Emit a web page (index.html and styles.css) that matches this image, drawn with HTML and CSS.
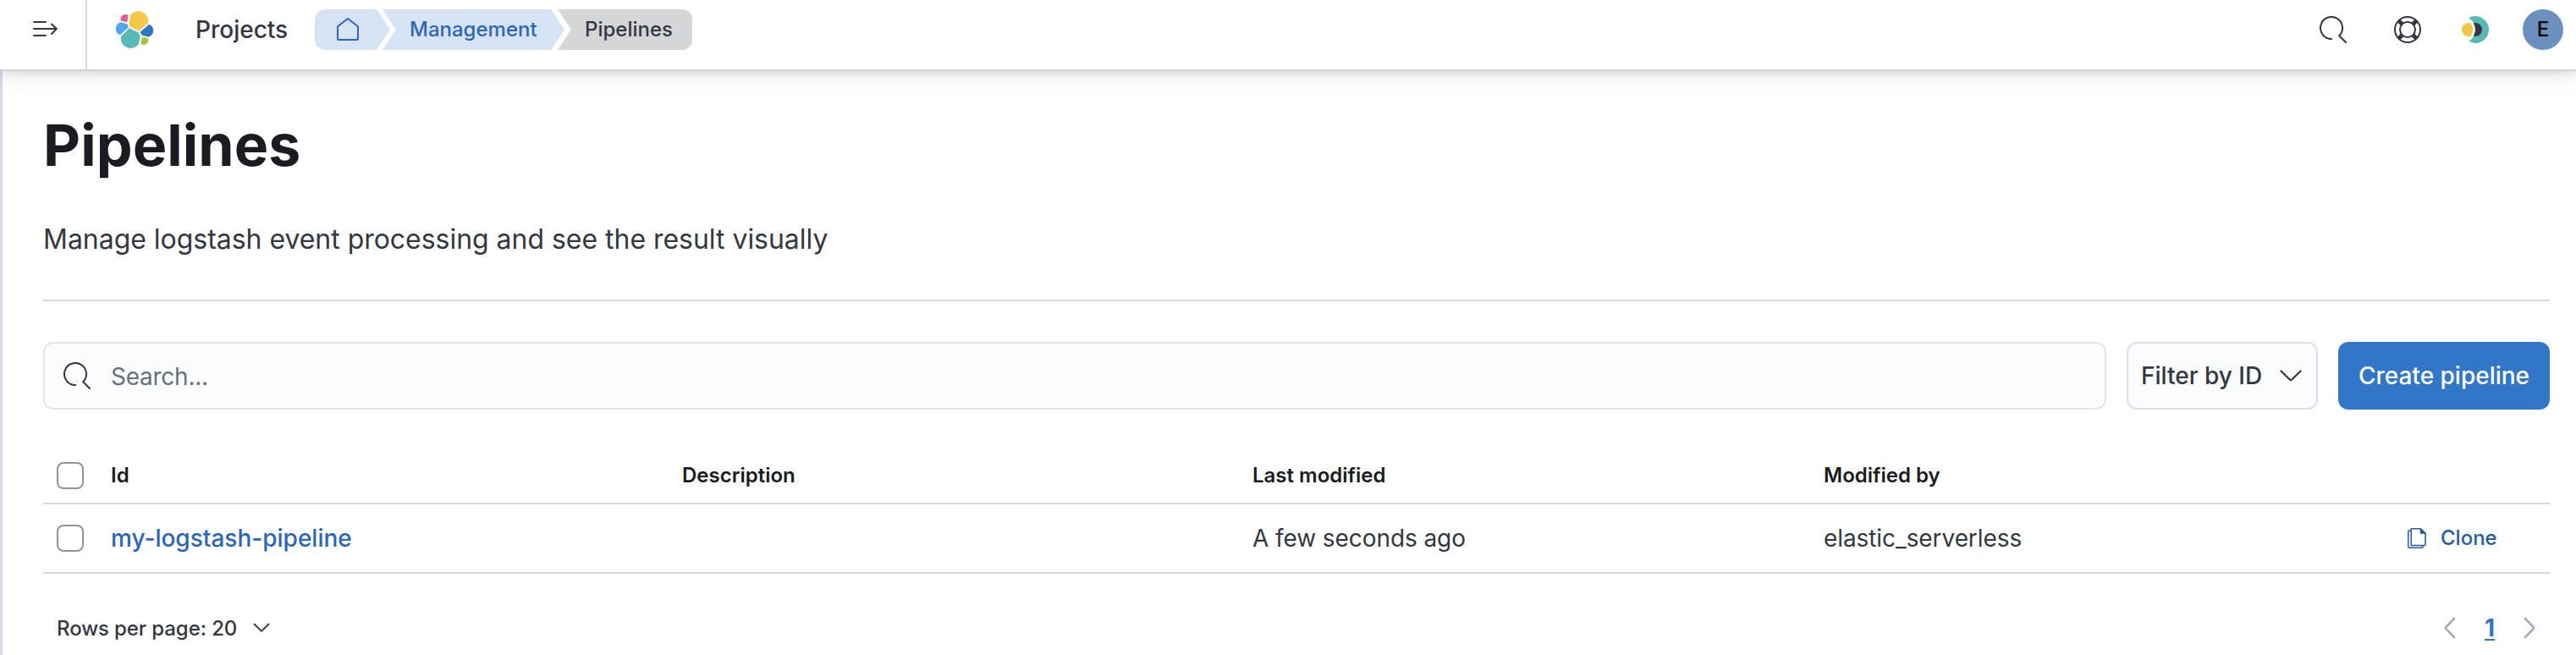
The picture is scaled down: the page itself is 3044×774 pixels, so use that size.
FILE: index.html
```html
<!DOCTYPE html>
<html lang="en">
<head>
<meta charset="utf-8">
<title>Pipelines</title>
<link rel="stylesheet" href="styles.css">
</head>
<body>
<div class="page">
  <header class="header">
    <button class="nav-toggle" aria-label="Toggle navigation">
      <svg width="32" height="32" viewBox="0 0 32 32" fill="none" stroke="#343741" stroke-width="2" stroke-linecap="round" stroke-linejoin="round"><path d="M3 7h14M3 15h27M3 23h14M24 9.5l5.8 5.5-5.8 6"/></svg>
    </button>
    <svg class="logo" width="48" height="48" viewBox="0 0 32 32">
      <path fill="#f5c747" d="M12.58 13.787l7.002 3.211 7.066-6.213a7.849 7.849 0 00.152-1.557c0-4.287-3.464-7.775-7.722-7.775a7.697 7.697 0 00-6.368 3.384l-1.176 6.125 1.046 2.825z"/>
      <path fill="#57bab4" d="M5.333 21.215A7.967 7.967 0 005.18 22.8c0 4.302 3.479 7.802 7.755 7.802a7.725 7.725 0 006.391-3.406l1.166-6.1-1.556-2.994-7.03-3.219-6.573 6.331z"/>
      <path fill="#df5b9b" d="M5.288 9.067l4.8 1.137L11.14 4.73a3.785 3.785 0 00-2.3-.777 3.82 3.82 0 00-3.807 3.835c0 .44.09.87.255 1.28z"/>
      <path fill="#51a6ef" d="M4.872 10.214C2.728 10.924 1.24 12.99 1.24 15.28a5.311 5.311 0 003.372 4.966l6.736-6.12-1.237-2.658-5.239-1.254z"/>
      <path fill="#9dc83d" d="M20.873 27.186a3.78 3.78 0 002.287.78 3.82 3.82 0 003.807-3.834 3.8 3.8 0 00-.254-1.28l-4.797-1.128-1.043 5.462z"/>
      <path fill="#3274c6" d="M21.848 20.563l5.28 1.241c2.146-.71 3.634-2.776 3.634-5.067a5.3 5.3 0 00-3.4-4.942l-6.906 6.06 1.392 2.708z"/>
    </svg>
    <span class="projects">Projects</span>
    <nav class="crumbs">
      <a class="crumb crumb-home" aria-label="Home">
        <svg width="32" height="32" viewBox="0 0 32 32" fill="none" stroke="#2c66b4" stroke-width="2" stroke-linejoin="round"><path d="M4 12.2L16 3l12 9.2V27a1 1 0 01-1 1H5a1 1 0 01-1-1z"/></svg>
      </a>
      <a class="crumb crumb-mid">Management</a>
      <span class="crumb crumb-last">Pipelines</span>
    </nav>
    <div class="header-right">
      <svg class="icon-search" width="32" height="32" viewBox="0 0 32 32" fill="none" stroke="#343741" stroke-width="2" stroke-linecap="round" stroke-linejoin="round"><path d="M14.2 27A13 13 0 1 1 23.2 23.2L31 31"/></svg>
      <svg class="icon-help" width="32" height="32" viewBox="0 0 32 32" fill="none" stroke="#343741" stroke-width="2"><circle cx="16" cy="16" r="15"/><circle cx="16" cy="16" r="9"/><path stroke-width="5" d="M5.6 5.6l4 4M26.4 5.6l-4 4M5.6 26.4l4-4M26.4 26.4l-4-4"/></svg>
      <svg class="icon-news" width="32" height="32" viewBox="0 0 32 32"><path fill="#57bab4" d="M16 0a16 16 0 110 32 16 16 0 01-7.700-2.200A16 16 0 008.300 2.200 16 16 0 0116 0z"/><path fill="#343741" d="M13.700 8H16a8 8 0 010 16h-2.300a16 16 0 000-16z"/><path fill="#f5c747" d="M8 8c1.100 0 2.100.2 3 .6a15 15 0 010 14.800c-.9.400-1.900.6-3 .6A8 8 0 018 8z"/></svg>
      <span class="avatar">E</span>
    </div>
  </header>

  <main class="content">
    <h1 class="title">Pipelines</h1>
    <p class="lead">Manage logstash event processing and see the result visually</p>
    <div class="toolbar">
      <div class="search">
        <svg width="32" height="32" viewBox="0 0 32 32" fill="none" stroke="#343741" stroke-width="2" stroke-linecap="round" stroke-linejoin="round"><path d="M14.2 27A13 13 0 1 1 23.2 23.2L31 31"/></svg>
        <span>Search...</span>
      </div>
      <button class="filter">Filter by ID
        <svg width="26" height="14" viewBox="0 0 26 14" fill="none" stroke="#343741" stroke-width="2.2" stroke-linecap="round" stroke-linejoin="round"><path d="M1.500 1.500l10.500 10.200q1 .9 2 0L24.500 1.500"/></svg>
      </button>
      <button class="create">Create pipeline</button>
    </div>

    <div class="table">
      <div class="row row-head">
        <span class="check"></span><span>Id</span><span>Description</span><span>Last modified</span><span>Modified by</span><span></span>
      </div>
      <div class="row row-body">
        <span class="check"></span><a class="link">my-logstash-pipeline</a><span></span><span class="cell">A few seconds ago</span><span class="cell">elastic_serverless</span>
        <a class="clone">
          <svg width="22" height="24" viewBox="0 0 22 24" fill="none" stroke="#265b9f" stroke-width="1.500" stroke-linejoin="round"><path d="M4.200.8h11L21 6.500v13.300a.8.800 0 01-.8.800H5a.8.800 0 01-.8-.8z"/><path fill="#265b9f" d="M15.500.8V6H21z"/><path d="M4 2.900H1.800a1 1 0 00-1 1v18.300a1 1 0 001 1H17a1 1 0 001-1v-1.500"/></svg>
          Clone
        </a>
      </div>
    </div>

    <footer class="pager">
      <div class="rows">Rows per page: 20
        <svg width="20" height="12" viewBox="0 0 20 12" fill="none" stroke="#343741" stroke-width="1.900" stroke-linecap="round" stroke-linejoin="round"><path d="M1.500 1.500l7.700 7.700q.8.700 1.600 0l7.700-7.700"/></svg>
      </div>
      <div class="pages">
        <svg width="14" height="26" viewBox="0 0 14 26" fill="none" stroke="#a2abba" stroke-width="2.600" stroke-linecap="round" stroke-linejoin="round"><path d="M12 2L2.300 12q-.8 1 0 2L12 24"/></svg>
        <span class="current">1</span>
        <svg width="14" height="26" viewBox="0 0 14 26" fill="none" stroke="#a2abba" stroke-width="2.600" stroke-linecap="round" stroke-linejoin="round"><path d="M2 2l9.700 10q.8 1 0 2L2 24"/></svg>
      </div>
    </footer>
  </main>
</div>
</body>
</html>
```

FILE: styles.css
```css
* { box-sizing: border-box; }
body {
  margin: 0;
  background: #fff;
  color: #343741;
  font-family: Inter, "Liberation Sans", sans-serif;
  font-size: 28px;
}
button { font: inherit; color: inherit; margin: 0; padding: 0; border: 0; background: none; }
svg { display: block; flex: none; }
.page { height: 774px; overflow: hidden; }

.header {
  height: 84px;
  padding-bottom: 12px;
  display: flex;
  align-items: center;
  border-bottom: 2px solid #cbd1de;
  background: #fff;
  line-height: 48px;
  position: relative;
  box-shadow: 0 1.400px 8px rgba(0,0,0,.08), 0 5.200px 14px rgba(0,0,0,.05), 0 12px 24px rgba(0,0,0,.05);
}
.nav-toggle {
  display: flex;
  align-items: flex-start;
  width: 103px;
  height: 82px;
  align-self: flex-start;
  border-right: 2px solid #d3dae6;
  padding: 19px 0 0 37px;
  flex: none;
}
.logo { margin-left: 32px; }
.projects { margin-left: 48px; width: 141px; font-weight: 500; white-space: nowrap; }

.crumbs { display: flex; font-size: 24px; font-weight: 500; line-height: 48px; }
.crumb { height: 48px; display: block; }
.crumb-home {
  width: 89px;
  padding: 8px 0 0 23px;
  background: #d6e3f4;
  border-radius: 12px 0 0 12px;
  clip-path: polygon(0 0, 73px 0, 100% 50%, 73px 100%, 0 100%);
}
.crumb-mid {
  width: 215px;
  margin-left: -9px;
  padding-left: 32px;
  background: #d6e3f4;
  color: #2c66b4;
  clip-path: polygon(0 0, 199px 0, 100% 50%, 199px 100%, 0 100%, 16px 50%);
}
.crumb-last {
  width: 159px;
  margin-left: -8px;
  padding-left: 32px;
  background: #d5d6d8;
  border-radius: 0 12px 12px 0;
  clip-path: polygon(0 0, 100% 0, 100% 100%, 0 100%, 16px 50%);
}
.header-right { margin-left: auto; margin-right: 15px; display: flex; align-items: center; }
.icon-help { margin-left: 56px; }
.icon-news { margin-left: 48px; }
.avatar {
  margin-left: 40px;
  width: 48px;
  height: 48px;
  border-radius: 50%;
  background: #6b90be;
  color: #000;
  font-size: 24px;
  font-weight: 500;
  line-height: 47px;
  text-align: center;
}

.content { height: 690px; border-left: 3px solid #d3dae6; padding: 47px 31px 0 48px; }
.title { margin: 0; font-size: 68px; line-height: 80px; font-weight: 700; letter-spacing: .1px; color: #1a1c21; }
.lead { margin: 0; padding: 48px 0 0; height: 145px; font-size: 32px; line-height: 48px; letter-spacing: -.03px; border-bottom: 2px solid #d3dae6; }

.toolbar { display: flex; gap: 24px; margin-top: 48px; height: 80px; font-weight: 500; }
.search {
  flex: 1;
  display: flex;
  align-items: center;
  gap: 24px;
  padding-left: 22px;
  border: 2px solid #e2e5ef;
  border-radius: 12px;
  background: #fbfcfd;
  color: #69707d;
  font-weight: 400;
  letter-spacing: -.25px;
}
.search svg { margin-top: -1px; }
.search span { padding-top: 1px; }
.filter {
  width: 226px;
  border: 2px solid #dadeea;
  border-radius: 12px;
  background: #fbfcfd;
  display: flex;
  align-items: center;
  justify-content: space-between;
  padding: 0 17px 0 15px;
  white-space: nowrap;
}
.create { width: 250px; border-radius: 12px; background: #3276c8; color: #fff; white-space: nowrap; }

.table { margin-top: 46px; }
.row {
  display: grid;
  grid-template-columns: 80px 675px 674px 675px 675px 1fr;
  align-items: center;
  border-bottom: 2px solid #d3dae6;
  white-space: nowrap;
}
.row-head { height: 66px; font-size: 24px; line-height: 28px; font-weight: 600; color: #1a1c21; }
.row-head span:not(.check) { padding-bottom: 1px; }
.row-body { height: 82px; }
.cell { letter-spacing: -.08px; }
.check { width: 32px; height: 32px; margin-left: 16px; border: 2px solid #949494; border-radius: 8px; background: #fff; }
.link { color: #2c66b4; font-weight: 500; }
.clone { display: flex; align-items: center; gap: 17px; padding-bottom: 1px; font-size: 24px; font-weight: 500; color: #265b9f; margin-left: 15px; }

.pager { display: flex; justify-content: space-between; align-items: center; margin-top: 39px; height: 50px; padding: 0 17px 0 16px; }
.rows { display: flex; align-items: center; gap: 19px; font-size: 24px; font-weight: 500; letter-spacing: -.09px; white-space: nowrap; }
.pages { display: flex; align-items: center; }
.current { width: 80px; text-align: center; font-weight: 700; color: #3274c6; text-decoration: underline; text-decoration-thickness: 2px; text-underline-offset: 3px; }
```
